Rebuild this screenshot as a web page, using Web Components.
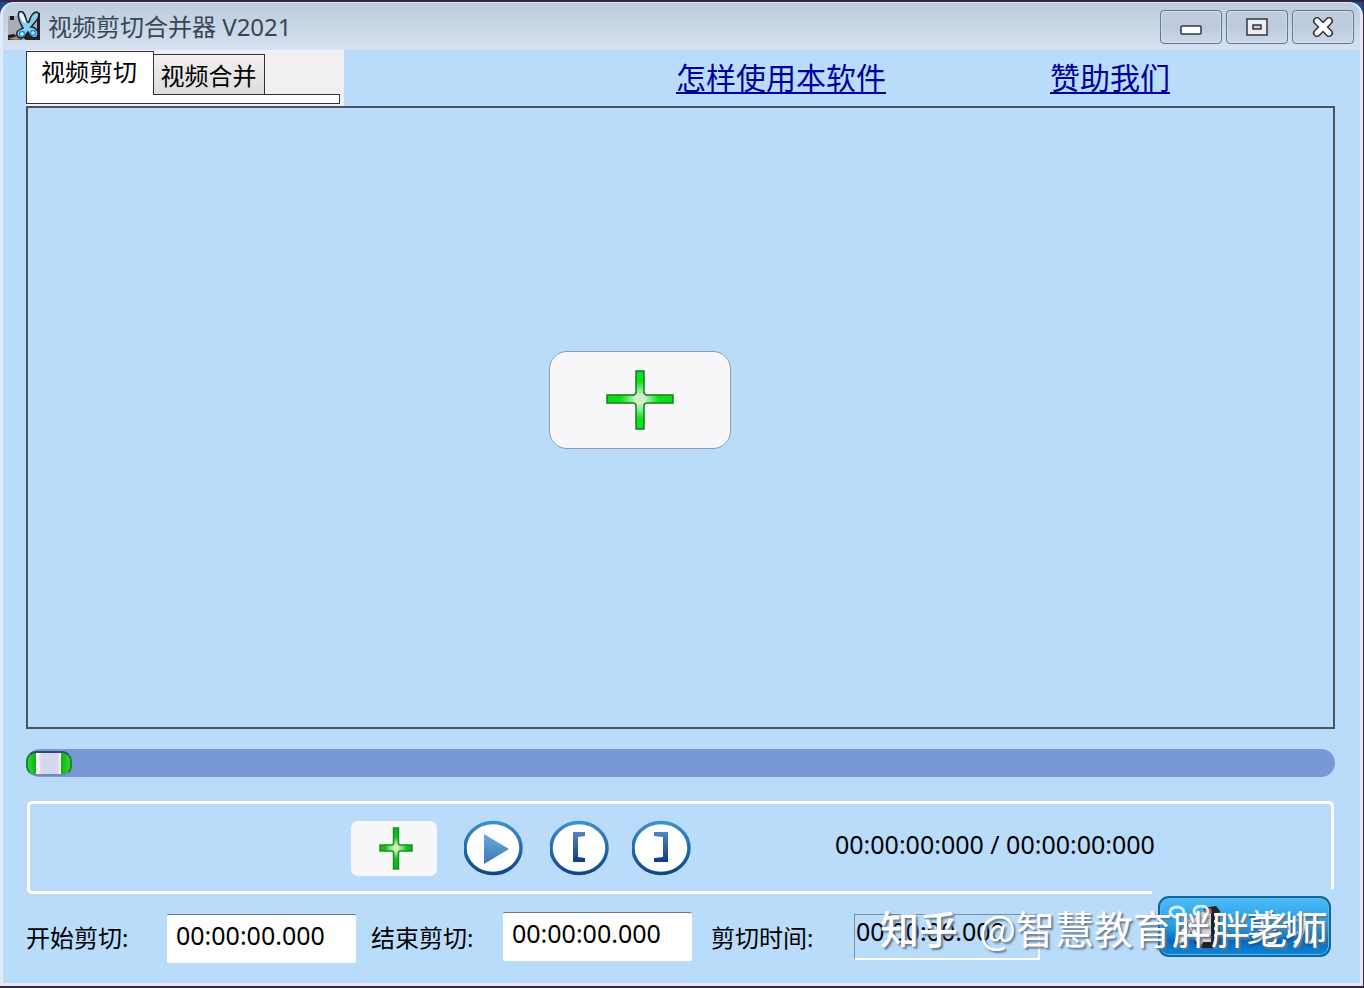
<!DOCTYPE html>
<html lang="zh-CN">
<head>
<meta charset="utf-8">
<title>视频剪切合并器 V2021</title>
<style>
  body { margin: 0; background: #1b4c93; font-family: "Noto Sans", "Noto Sans CJK SC", sans-serif; color: #000; }
</style>
</head>
<body>
<cutter-app></cutter-app>
<script>
const define = (name, html) => {
  const tpl = document.createElement('template');
  tpl.innerHTML = html;
  customElements.define(name, class extends HTMLElement {
    constructor() {
      super();
      this.attachShadow({ mode: 'open' }).append(tpl.content.cloneNode(true));
      const labelled = this.shadowRoot.querySelector('button, input[type=range]');
      if (labelled && this.getAttribute('label')) labelled.setAttribute('aria-label', this.getAttribute('label'));
      const field = this.shadowRoot.querySelector('input[type=text]');
      if (field) {
        field.value = this.getAttribute('value') || '';
        field.readOnly = this.hasAttribute('readonly');
      }
      const link = this.shadowRoot.querySelector('a');
      if (link) link.href = this.getAttribute('href') || '#';
    }
  });
};

/* Window frame: title bar with icon and caption buttons, then the client area */
define('app-window', `
<style>
  :host { display: flex; flex-direction: column; min-height: 100vh; box-sizing: border-box;
    border-top: 2px solid #32263f; border-right: 1px solid #3a2a3c; border-bottom: 2px solid #3f2337; }
  .frame { flex: 1; display: flex; flex-direction: column; border: 3px solid #e3eaf6; border-top-width: 1px;
    border-radius: 14px 14px 0 0; background: #b9dcfb; overflow: hidden; }
  header { display: flex; align-items: center; height: 47px; padding: 0 6px 0 5px; box-sizing: border-box;
    background: linear-gradient(#bccbdc, #c9d6e6 50%, #d6e2f1); }
  h1 { flex: 1; margin: 0 0 0 8px; font-size: 24px; line-height: 32px; font-weight: 400; color: #3a4655; }
  .buttons { display: flex; gap: 4px; }
  main { flex: 1; display: flex; flex-direction: column; padding: 0 25px 0 23px; }
</style>
<div class="frame">
  <header><slot name="icon"></slot><h1><slot name="title"></slot></h1><div class="buttons"><slot name="buttons"></slot></div></header>
  <main><slot></slot></main>
</div>`);

define('app-icon', `
<style>:host { display: block; width: 32px; height: 32px; } svg { display: block; }</style>
<svg width="32" height="32" viewBox="0 0 32 32" aria-hidden="true">
  <path d="M0 5h11l6 12 9-13 6-4v29H0z" fill="#a9adb4"/>
  <path d="M0 24l6-1 8 6H0zM29 2h3v27H18l-4-3 6-3 9-2z" fill="#252027"/>
  <path d="M0 28l9-3 7 3-8 1z" fill="#a98a68"/>
  <rect x="2" y="5" width="4" height="4" fill="#17191d"/>
  <path d="M11 1c3-2 6 1 7 7 1 3 2 4 3 3 1-5 4-10 8-10 3 2 2 6-1 9l-5 6c4 0 7 3 7 7 0 3-3 5-6 3-2-1-3-3-4-5-2 3-4 6-7 6s-5-3-4-6c1-2 4-3 6-4-3-5-6-12-4-16z" fill="#89cdf0" stroke="#18222e" stroke-width="1.5"/>
  <path d="M12 2c2 0 5 4 6 10l-3-1c-2-3-4-7-3-9z" fill="#f2fafe"/>
  <circle cx="14" cy="23" r="2.5" fill="#e1f6ff" stroke="#218fc8" stroke-width="1.5"/>
  <circle cx="25" cy="22" r="2.5" fill="#bceaff" stroke="#218fc8" stroke-width="1.5"/>
</svg>`);

define('caption-button', `
<style>
  :host { display: block; }
  button { display: grid; place-items: center; width: 62px; height: 34px; padding: 0; border: 1px solid #64748f;
    border-radius: 4px; background: linear-gradient(#c0cee0, #bccadc 50%, #cbd8e8); box-shadow: inset 0 0 0 1px #d3deec; }
</style>
<button type="button"><slot></slot></button>`);

define('tab-strip', `
<style>
  :host { display: block; width: 318px; height: 56px; background: #f0f0f0; box-sizing: border-box; padding: 1px 4px 2px 0; }
  .tabs { display: flex; align-items: flex-end; height: 43px; }
  button { font: inherit; font-size: 24px; line-height: 32px; box-sizing: border-box; border: 1px solid #333; border-bottom: 0; padding: 0; color: #000; }
  .on { width: 128px; height: 43px; background: #fff; padding: 0 2px 2px 0; z-index: 1; }
  .off { width: 112px; height: 40px; margin-left: -1px; background: linear-gradient(#f1f1f1, #dcdcdc); padding-top: 2px; border-left: 0; }
  .band { height: 10px; box-sizing: border-box; border: 1px solid #333; border-top: 0; background: linear-gradient(#333, #333) right top / calc(100% - 126px) 1px no-repeat #fff; }
</style>
<div class="tabs" role="tablist">
  <button class="on" type="button" role="tab" aria-selected="true"><slot name="first"></slot></button>
  <button class="off" type="button" role="tab" aria-selected="false"><slot name="second"></slot></button>
</div>
<div class="band"></div>`);

define('text-link', `
<style>
  :host { display: block; }
  a { font-size: 30px; line-height: 40px; color: #00009c; text-decoration: underline; text-decoration-thickness: 2px; text-underline-offset: 3px; white-space: nowrap; }
</style>
<a><slot></slot></a>`);

/* Green plus on a white plate, in a large and a compact size */
define('add-button', `
<style>
  :host { display: block; }
  button { display: grid; place-items: center; width: 182px; height: 98px; padding: 0; border: 1px solid #9199a8; border-radius: 18px; background: #f8f8fa; }
  :host([compact]) button { width: 86px; height: 55px; border: 0; border-radius: 7px; padding-left: 4px; }
  svg { display: block; width: 68px; height: 60px; }
  .small { display: none; width: 34px; height: 43px; }
  :host([compact]) .large { display: none; }
  :host([compact]) .small { display: block; }
</style>
<button type="button">
<svg class="large" viewBox="0 0 68 60" aria-hidden="true">
  <defs><radialGradient id="g" gradientUnits="userSpaceOnUse" cx="34" cy="30" r="31">
    <stop offset="0" stop-color="#d4f2d4"/><stop offset=".2" stop-color="#b4efb6"/><stop offset=".6" stop-color="#10e21a"/><stop offset="1" stop-color="#08dc10"/></radialGradient></defs>
  <path d="M30 1h8v21q0 3 3 3h26v8H41q-3 0-3 3v23h-8V36q0-3-3-3H1v-8h26q3 0 3-3z" fill="url(#g)" stroke="#127d1d" stroke-width="1.5"/>
  <circle cx="34" cy="29" r="6" fill="#cdeed0"/>
</svg>
<svg class="small" viewBox="0 0 34 43" aria-hidden="true">
  <defs><radialGradient id="h" gradientUnits="userSpaceOnUse" cx="17" cy="21" r="15">
    <stop offset="0" stop-color="#dcf6d0"/><stop offset=".3" stop-color="#a8e89c"/><stop offset=".7" stop-color="#1fbe2a"/><stop offset="1" stop-color="#12b61c"/></radialGradient></defs>
  <path d="M14.500 1h5v15q0 2 2 2H33v6H21.500q-2 0-2 2v16h-5V26q0-2-2-2H1v-6h11.500q2 0 2-2z" fill="url(#h)" stroke="#159421" stroke-width="1.500"/>
</svg></button>`);

define('video-stage', `
<style>
  :host { flex: 1; display: flex; align-items: center; justify-content: center; box-sizing: border-box;
    min-height: 300px; border: 2px solid #4c535d; padding: 0 82px 36px 0; }
</style>
<slot></slot>`);

define('seek-bar', `
<style>
  :host { display: block; margin-top: 20px; }
  input { -webkit-appearance: none; appearance: none; display: block; width: 100%; height: 28px; margin: 0; border-radius: 14px; background: #7799d7; }
  input::-webkit-slider-thumb { -webkit-appearance: none; width: 46px; height: 25px; box-sizing: border-box; border: 2px solid #198a25; border-top-color: #3c4866; border-bottom-color: #7d86a8; border-radius: 10px;
    background: linear-gradient(90deg, #35d538 0, #08b412 8px, #fff 8px, #fff 10px, #d4d8ef 13px, #d4d8ef 30px, #fff 33px, #08b412 33px, #35d538 100%); }
</style>
<input type="range" min="0" max="100" value="0">`);

define('control-panel', `
<style>
  :host { display: flex; align-items: center; box-sizing: border-box; height: 93px; margin: 24px 1px 0; border: 3px solid #fff;
    border-radius: 5px; padding-left: 321px; }
  .add { padding-top: 2px; }
  .round { display: flex; margin-left: 27px; }
  .time { margin-left: 143px; padding-bottom: 8px; font-size: 25px; line-height: 32px; white-space: nowrap; }
</style>
<div class="add"><slot name="add"></slot></div><div class="round"><slot></slot></div><div class="time"><slot name="time"></slot></div>`);

define('round-button', `
<style>
  :host { display: block; }
  button { display: block; padding: 0; border: 0; background: none; }
  svg { display: block; }
  path { display: none; }
  :host([kind=play]) .play, :host([kind=in]) .in, :host([kind=out]) .out { display: inline; }
</style>
<button type="button"><svg width="60" height="56" viewBox="0 0 60 56" aria-hidden="true">
  <defs>
    <linearGradient id="r" x2="0" y2="1"><stop stop-color="#3d8fce"/><stop offset="1" stop-color="#0e4688"/></linearGradient>
    <linearGradient id="p" x2="0" y2="1"><stop stop-color="#73a8d9"/><stop offset="1" stop-color="#3478b9"/></linearGradient>
    <linearGradient id="b" x2="0" y2="1"><stop stop-color="#5485c2"/><stop offset="1" stop-color="#0d3b8d"/></linearGradient>
  </defs>
  <ellipse cx="29" cy="28" rx="28" ry="25.500" fill="#fff" stroke="url(#r)" stroke-width="3.500"/>
  <path class="play" d="M20 14v30l25-15z" fill="url(#p)"/>
  <path class="in" d="M23 12h12v4l-7 1v20l7 1v4H23z" fill="url(#b)"/>
  <path class="out" d="M22 12h14v30H22v-4l9-1V17l-9-1z" fill="url(#b)"/>
</svg></button>`);

define('time-field', `
<style>
  :host { display: block; }
  label { display: flex; align-items: flex-start; }
  span { width: var(--caption-width, 141px); font-size: 24px; line-height: 32px; margin-top: var(--caption-top, 8px); white-space: nowrap; }
  input { box-sizing: border-box; width: 189px; height: 49px; margin: 0; padding: 0 0 8px 9px; border: 0; border-top: 1px solid #68778c; border-radius: 2px;
    font: inherit; font-size: 25px; color: #000; background: #fff; }
  :host([readonly]) input { width: 186px; height: 46px; padding: 0 0 12px 1px; border: 1px solid #7e8da0; border-right: 2px solid #fff; border-bottom: 2px solid #fff; border-radius: 0; background: transparent; }
</style>
<label><span><slot></slot></span><input type="text"></label>`);

define('cut-button', `
<style>
  :host { display: block; background: #b9dcfb; padding: 7px 6px 0; }
  button { display: flex; align-items: center; justify-content: space-between; box-sizing: border-box; width: 173px; height: 61px; padding: 0 11px 0 8px;
    border: 2px solid #12649f; border-radius: 11px; background: linear-gradient(#4dbcf6, #229de8 50%, #0869bd 75%, #0c86d8);
    box-shadow: inset 0 0 0 1px #57bdf0; color: #fff; font: inherit; font-size: 36px; line-height: 40px; white-space: nowrap; }
  svg { flex: none; display: block; }
  span { text-shadow: 1px 2px 2px #17538b; padding-top: 2px; }
</style>
<button type="button">
  <svg width="54" height="44" viewBox="0 0 54 44" aria-hidden="true">
    <path d="M36 3l12-2 4 5v33l-5 4H30l-4-6 8-5z" fill="#242125"/>
    <path d="M32 8l11-4v33H28V21z" fill="#d8d5cf"/>
    <path d="M36 5l7-2 1 5-7 2z" fill="#d15747"/>
    <path d="M46 8h3v3h-3zM46 15h3v3h-3zM46 22h3v3h-3zM46 29h3v3h-3zM46 36h3v3h-3z" fill="#cfcfd1"/>
    <path d="M29 30h14v3H29z" fill="#876d51"/>
    <path d="M14 11l17 30 4-3-16-29zM29 10L11 27 6 41l10-4 17-25z" fill="#f1f0eb" stroke="#6b747c"/>
    <ellipse cx="9" cy="7" rx="7" ry="5" fill="none" stroke="#d9edf8" stroke-width="3"/>
    <ellipse cx="33" cy="6" rx="7" ry="5" fill="none" stroke="#d9edf8" stroke-width="3"/>
  </svg>
  <span><slot></slot></span>
</button>`);

define('water-mark', `
<style>
  :host { position: absolute; right: 36px; bottom: 33px; display: flex; gap: 21px; font-size: 39px; line-height: 56px; color: #fff;
    white-space: nowrap; text-shadow: 2px 2px 2px #66788c; pointer-events: none; font-family: "Noto Sans CJK SC", sans-serif; }
  .brand { font-weight: 500; }
</style>
<span class="brand"><slot name="brand"></slot></span><span><slot></slot></span>`);

define('cutter-app', `
<style>
  :host { display: block; position: relative; }
  .top { display: flex; align-items: flex-start; height: 56px; }
  .top text-link { margin-top: 8px; }
  .help { margin-left: 332px; }
  .donate { margin-left: 164px; }
  .set { margin-left: 26px; }
  .set + .set { margin-left: 22px; }
  .bottom { display: flex; align-items: flex-start; height: 94px; margin-top: -5px; position: relative; }
  .bottom time-field { margin-top: 25px; }
  .bottom .end { margin: 23px 0 0 15px; --caption-width: 132px; --caption-top: 10px; }
  .bottom .span { margin-left: 19px; --caption-width: 143px; }
  cut-button { margin-left: auto; margin-right: -2px; }
</style>
<app-window>
  <app-icon slot="icon"></app-icon>
  <span slot="title">视频剪切合并器 V2021</span>
  <caption-button slot="buttons" label="最小化"><svg width="24" height="20" viewBox="0 0 24 20" style="display:block"><rect x="2" y="9" width="20" height="8" rx="1" fill="#fff" stroke="#2f3440" stroke-width="1.5"/></svg></caption-button>
  <caption-button slot="buttons" label="最大化"><svg width="24" height="20" viewBox="0 0 24 20" style="display:block"><path d="M2 2h20v16H2z" fill="#eee" stroke="#2f3440" stroke-width="1.5"/><path d="M8 8h8v4H8z" fill="#c3cfdf" stroke="#2f3440" stroke-width="1.5"/></svg></caption-button>
  <caption-button slot="buttons" label="关闭"><svg width="24" height="20" viewBox="0 0 24 20" style="display:block"><path d="M6 4l12 12M18 4L6 16" stroke="#2f3440" stroke-width="8" stroke-linecap="round"/><path d="M6 4l12 12M18 4L6 16" stroke="#fff" stroke-width="5" stroke-linecap="round"/></svg></caption-button>

  <div class="top">
    <tab-strip><span slot="first">视频剪切</span><span slot="second">视频合并</span></tab-strip>
    <text-link class="help" href="#help">怎样使用本软件</text-link>
    <text-link class="donate" href="#donate">赞助我们</text-link>
  </div>
  <video-stage><add-button label="添加视频"></add-button></video-stage>
  <seek-bar label="播放进度"></seek-bar>
  <control-panel>
    <add-button slot="add" compact label="添加视频"></add-button>
    <round-button kind="play" label="播放"></round-button>
    <round-button class="set" kind="in" label="设为开始"></round-button>
    <round-button class="set" kind="out" label="设为结束"></round-button>
    <span slot="time">00:00:00:000 / 00:00:00:000</span>
  </control-panel>
  <div class="bottom">
    <time-field class="start" value="00:00:00.000">开始剪切:</time-field>
    <time-field class="end" value="00:00:00.000">结束剪切:</time-field>
    <time-field class="span" readonly value="00:00:00.000">剪切时间:</time-field>
    <cut-button>剪切</cut-button>
  </div>
</app-window>
<water-mark><span slot="brand">知乎</span>@智慧教育胖胖老师</water-mark>`);
</script>
</body>
</html>
